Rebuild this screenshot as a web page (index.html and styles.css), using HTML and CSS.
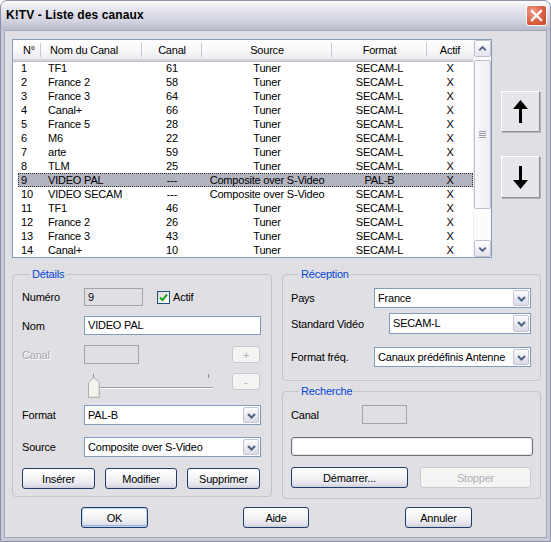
FILE: index.html
```html
<!DOCTYPE html>
<html lang="fr">
<head>
<meta charset="utf-8">
<title>K!TV - Liste des canaux</title>
<link rel="stylesheet" href="styles.css">
</head>
<body>
<div class="window">
  <div class="titlebar">
    <span class="title">K!TV - Liste des canaux</span>
    <div class="close">
      <svg width="21" height="21" viewBox="0 0 21 21"><path d="M6 6 L15 15 M15 6 L6 15" stroke="#fff" stroke-width="2.4" stroke-linecap="square"/></svg>
    </div>
  </div>
  <div class="client">
    <div class="top">
      <div class="list">
        <div class="list-body">
          <div class="lhead">
            <div class="h c1">N°</div><div class="h c2">Nom du Canal</div><div class="h">Canal</div><div class="h">Source</div><div class="h">Format</div><div class="h">Actif</div>
          </div>
          <div class="lrow"><div class="c1">1</div><div class="c2">TF1</div><div>61</div><div>Tuner</div><div>SECAM-L</div><div>X</div></div>
          <div class="lrow"><div class="c1">2</div><div class="c2">France 2</div><div>58</div><div>Tuner</div><div>SECAM-L</div><div>X</div></div>
          <div class="lrow"><div class="c1">3</div><div class="c2">France 3</div><div>64</div><div>Tuner</div><div>SECAM-L</div><div>X</div></div>
          <div class="lrow"><div class="c1">4</div><div class="c2">Canal+</div><div>66</div><div>Tuner</div><div>SECAM-L</div><div>X</div></div>
          <div class="lrow"><div class="c1">5</div><div class="c2">France 5</div><div>28</div><div>Tuner</div><div>SECAM-L</div><div>X</div></div>
          <div class="lrow"><div class="c1">6</div><div class="c2">M6</div><div>22</div><div>Tuner</div><div>SECAM-L</div><div>X</div></div>
          <div class="lrow"><div class="c1">7</div><div class="c2">arte</div><div>59</div><div>Tuner</div><div>SECAM-L</div><div>X</div></div>
          <div class="lrow"><div class="c1">8</div><div class="c2">TLM</div><div>25</div><div>Tuner</div><div>SECAM-L</div><div>X</div></div>
          <div class="lrow sel"><div class="c1">9</div><div class="c2">VIDEO PAL</div><div>---</div><div>Composite over S-Video</div><div>PAL-B</div><div>X</div></div>
          <div class="lrow"><div class="c1">10</div><div class="c2">VIDEO SECAM</div><div>---</div><div>Composite over S-Video</div><div>SECAM-L</div><div>X</div></div>
          <div class="lrow"><div class="c1">11</div><div class="c2">TF1</div><div>46</div><div>Tuner</div><div>SECAM-L</div><div>X</div></div>
          <div class="lrow"><div class="c1">12</div><div class="c2">France 2</div><div>26</div><div>Tuner</div><div>SECAM-L</div><div>X</div></div>
          <div class="lrow"><div class="c1">13</div><div class="c2">France 3</div><div>43</div><div>Tuner</div><div>SECAM-L</div><div>X</div></div>
          <div class="lrow"><div class="c1">14</div><div class="c2">Canal+</div><div>10</div><div>Tuner</div><div>SECAM-L</div><div>X</div></div>
        </div>
        <div class="vscroll">
          <div class="sbtn"><svg width="16" height="16" viewBox="0 0 16 16"><path d="M4.5 9.5 L8 6 L11.5 9.5" fill="none" stroke="#4d6185" stroke-width="2"/></svg></div>
          <div class="thumb"><div class="grip"></div></div>
          <div class="track"></div>
          <div class="sbtn"><svg width="16" height="16" viewBox="0 0 16 16"><path d="M4.5 6.5 L8 10 L11.5 6.5" fill="none" stroke="#4d6185" stroke-width="2"/></svg></div>
        </div>
      </div>
      <div class="movebtns">
        <div class="mv up"><svg width="15" height="23" viewBox="0 0 15 23"><path d="M7.5 0 L15 9 L9 9 L9 23 L6 23 L6 9 L0 9 Z" fill="#000"/></svg></div>
        <div class="mv down"><svg width="15" height="23" viewBox="0 0 15 23"><path d="M7.5 23 L15 14 L9 14 L9 0 L6 0 L6 14 L0 14 Z" fill="#000"/></svg></div>
      </div>
    </div>

    <div class="mid">
      <div class="group details">
        <div class="gtitle">Détails</div>
        <div class="row r-num">
          <span class="lbl">Numéro</span>
          <div class="field ro num">9</div>
          <div class="check"><svg width="11" height="11" viewBox="0 0 11 11"><path d="M2 5.5 L4.5 8 L9 2.5" fill="none" stroke="#21a121" stroke-width="2"/></svg></div>
          <span class="chklbl">Actif</span>
        </div>
        <div class="row r-nom">
          <span class="lbl">Nom</span>
          <div class="field edit">VIDEO PAL</div>
        </div>
        <div class="row r-canal">
          <span class="lbl disabled">Canal</span>
          <div class="field ro canal"></div>
          <div class="btn small dis plus">+</div>
        </div>
        <div class="row r-slider">
          <svg class="slider" width="140" height="25" viewBox="0 0 140 25">
            <rect x="9" y="1" width="1" height="4" fill="#8d8d95"/>
            <rect x="124" y="1" width="1" height="4" fill="#8d8d95"/>
            <rect x="9" y="14" width="120" height="1" fill="#9a9aa4"/>
            <rect x="9" y="15" width="120" height="1" fill="#ffffff"/>
            <path d="M4.5 9.5 L10 4.5 L15.5 9.5 L15.5 24.5 L4.5 24.5 Z" fill="#f3f2ec" stroke="#aeadb0"/>
            <path d="M5 24 L15 24 L15 10" fill="none" stroke="#c8c6bd"/>
          </svg>
          <div class="btn small dis minus">-</div>
        </div>
        <div class="row r-format">
          <span class="lbl">Format</span>
          <div class="combo w177"><span class="ctext">PAL-B</span><span class="cbtn"><svg width="13" height="15" viewBox="0 0 13 15"><path d="M3 6 L6.5 9.5 L10 6" fill="none" stroke="#4d6185" stroke-width="2"/></svg></span></div>
        </div>
        <div class="row r-source">
          <span class="lbl">Source</span>
          <div class="combo w177"><span class="ctext">Composite over S-Video</span><span class="cbtn"><svg width="13" height="15" viewBox="0 0 13 15"><path d="M3 6 L6.5 9.5 L10 6" fill="none" stroke="#4d6185" stroke-width="2"/></svg></span></div>
        </div>
        <div class="row r-btns">
          <div class="btn b73">Insérer</div>
          <div class="btn b72">Modifier</div>
          <div class="btn b73">Supprimer</div>
        </div>
      </div>

      <div class="rightcol">
        <div class="group recv">
          <div class="gtitle">Réception</div>
          <div class="row r-pays">
            <span class="lbl lw83">Pays</span>
            <div class="combo w157"><span class="ctext">France</span><span class="cbtn"><svg width="13" height="15" viewBox="0 0 13 15"><path d="M3 6 L6.5 9.5 L10 6" fill="none" stroke="#4d6185" stroke-width="2"/></svg></span></div>
          </div>
          <div class="row r-std">
            <span class="lbl lw98">Standard Vidéo</span>
            <div class="combo w142"><span class="ctext">SECAM-L</span><span class="cbtn"><svg width="13" height="15" viewBox="0 0 13 15"><path d="M3 6 L6.5 9.5 L10 6" fill="none" stroke="#4d6185" stroke-width="2"/></svg></span></div>
          </div>
          <div class="row r-freq">
            <span class="lbl lw83">Format fréq.</span>
            <div class="combo w157"><span class="ctext">Canaux prédéfinis Antenne</span><span class="cbtn"><svg width="13" height="15" viewBox="0 0 13 15"><path d="M3 6 L6.5 9.5 L10 6" fill="none" stroke="#4d6185" stroke-width="2"/></svg></span></div>
          </div>
        </div>
        <div class="group search">
          <div class="gtitle">Recherche</div>
          <div class="row r-scanal">
            <span class="lbl lw71">Canal</span>
            <div class="field ro scanal"></div>
          </div>
          <div class="row r-prog">
            <div class="progress"></div>
          </div>
          <div class="row r-sbtns">
            <div class="btn b117">Démarrer...</div>
            <div class="btn dis b111">Stopper</div>
          </div>
        </div>
      </div>
    </div>

    <div class="bottom">
      <div class="btn def b67">OK</div>
      <div class="btn b66 aide">Aide</div>
      <div class="btn b67 annuler">Annuler</div>
    </div>
  </div>
</div>
</body>
</html>
```

FILE: styles.css
```css
* { box-sizing: border-box; }

body {
  margin: 0;
  background: #ffffff;
  font-family: "Liberation Sans", Arial, sans-serif;
  font-size: 11px;
  letter-spacing: -0.2px;
  color: #000;
}

.window {
  width: 551px;
  height: 542px;
  display: flex;
  flex-direction: column;
  background: #c9cad8;
  border: 1px solid #8e8fa3;
  border-radius: 7px 7px 0 0;
  overflow: hidden;
}

.titlebar {
  height: 29px;
  flex: none;
  display: flex;
  align-items: center;
  justify-content: space-between;
  padding: 0 3px 1px 5px;
  background: linear-gradient(#fdfdfe 0%, #ececf2 18%, #dedee8 45%, #d2d3df 70%, #b7b8ca 100%);
}

.title {
  font-weight: bold;
  font-size: 12px;
  color: #000;
  letter-spacing: 0.1px;
}

.close {
  width: 21px;
  height: 21px;
  border: 1px solid #fff;
  border-radius: 3px;
  background: radial-gradient(circle at 30% 30%, #f0a08a 0%, #e0684c 45%, #c8401f 100%);
  display: flex;
}
.close svg { margin: -1px; }

.client {
  flex: 1;
  margin: 0 3px 3px 3px;
  background: #e0dfe3;
  border: 1px solid #a5a6b8;
  padding: 8px 0 0 7px;
  display: flex;
  flex-direction: column;
}

/* ---------- top: list ---------- */
.top {
  display: flex;
  align-items: flex-start;
}

.list {
  width: 480px;
  height: 219px;
  border: 1px solid #7f9db9;
  background: #fff;
  display: flex;
}

.list-body {
  width: 460px;
  overflow: hidden;
}

.lhead {
  height: 21px;
  display: grid;
  grid-template-columns: 28px 101px 60px 130px 95px 46px;
  background: linear-gradient(#ffffff 0%, #f7f7f9 60%, #ebebef 100%);
  border-bottom: 2px solid #d4d4dc;
  box-shadow: 0 1px 0 #c0c0cc;
}

.lhead .h {
  line-height: 20px;
  text-align: center;
  background: linear-gradient(#c6c6cd, #c6c6cd) right center / 1px 14px no-repeat;
}
.lhead .h.c1 { text-align: left; padding-left: 10px; }
.lhead .h.c2 { text-align: left; padding-left: 9px; }
.lhead .h:last-child { background: none; }

.lrow {
  height: 14px;
  line-height: 14px;
  margin-left: 5px;
  display: grid;
  grid-template-columns: 23px 101px 60px 130px 95px 46px;
  white-space: nowrap;
}
.lrow div { text-align: center; }
.lrow .c1 { text-align: left; padding-left: 3px; }
.lrow .c2 { text-align: left; padding-left: 7px; }

.lrow.sel {
  background: #b2b4c0;
  outline: 1px dotted #333;
  outline-offset: -1px;
}

.vscroll {
  width: 18px;
  display: flex;
  flex-direction: column;
  background: #fcfcfd;
  border-left: 1px solid #eeeef2;
}

.sbtn {
  width: 17px;
  height: 17px;
  border: 1px solid #c0c1d0;
  border-radius: 2px;
  background: linear-gradient(#ffffff, #e3e3ec);
  display: flex;
  align-items: center;
  justify-content: center;
}

.thumb {
  height: 149px;
  margin-top: 3px;
  width: 17px;
  border: 1px solid #bebfcd;
  border-radius: 2px;
  background: linear-gradient(90deg, #fafafc, #ececf2);
  display: flex;
  align-items: center;
  justify-content: center;
}
.grip {
  width: 7px;
  height: 7px;
  background: repeating-linear-gradient(#9a9aa8 0 1px, transparent 1px 2px);
}

.track { flex: 1; }

.movebtns {
  margin-left: 9px;
  display: flex;
  flex-direction: column;
}

.mv {
  width: 39px;
  background: #e7e6ea;
  border: 1px solid;
  border-color: #ffffff #8f8f96 #8f8f96 #ffffff;
  box-shadow: 1px 1px 0 #b4b4bc;
  display: flex;
  align-items: center;
  justify-content: center;
}
.mv.up { margin-top: 52px; height: 41px; }
.mv.down { margin-top: 24px; height: 42px; }

/* ---------- middle ---------- */
.mid {
  display: flex;
  align-items: flex-start;
  margin-top: 16px;
}

.group {
  border: 1px solid #c3c3cb;
  border-radius: 4px;
}

.gtitle {
  width: fit-content;
  margin: -7px 0 0 8px;
  padding: 0 2px;
  line-height: 13px;
  color: #0046d5;
  background: #e0dfe3;
}

.details {
  width: 260px;
  height: 223px;
  padding-left: 9px;
}

.rightcol {
  margin-left: 10px;
  width: 259px;
  display: flex;
  flex-direction: column;
}

.recv { height: 107px; padding-left: 8px; }
.search { height: 108px; margin-top: 10px; padding-left: 8px; }

.row {
  display: flex;
  align-items: center;
}

.lbl { width: 62px; flex: none; }
.lbl.disabled { color: #a7a6ac; text-shadow: 1px 1px 0 #fff; }
.lw83 { width: 83px; }
.lw98 { width: 98px; }
.lw71 { width: 71px; }

.field {
  height: 19px;
  line-height: 17px;
  padding-left: 3px;
  border: 1px solid #7f9db9;
  background: #fff;
}
.field.ro {
  background: #e0dfe3;
  border-color: #a3a3aa;
}

.r-num { margin-top: 7px; height: 18px; }
.num { width: 59px; height: 18px; line-height: 16px; }

.check {
  margin-left: 14px;
  width: 13px;
  height: 13px;
  border: 1px solid #1c5180;
  background: linear-gradient(135deg, #dcdcd7, #fff);
  display: flex;
  align-items: center;
  justify-content: center;
}
.chklbl { margin-left: 3px; }

.r-nom { margin-top: 10px; height: 19px; }
.edit { width: 177px; }

.r-canal { margin-top: 10px; height: 19px; }
.canal { width: 55px; }
.plus { margin-left: 93px; }

.r-slider { margin-top: 9px; height: 25px; align-items: flex-start; }
.slider { margin-left: 62px; }
.minus { margin-left: 8px; }

.r-format { margin-top: 7px; height: 20px; }
.r-source { margin-top: 12px; height: 20px; }
.r-btns { margin-top: 11px; height: 21px; gap: 10px; }

.combo {
  height: 20px;
  display: flex;
  border: 1px solid #7f9db9;
  background: #fff;
}
.w177 { width: 177px; }
.w157 { width: 157px; }
.w142 { width: 142px; }

.ctext {
  flex: 1;
  padding-left: 3px;
  line-height: 18px;
  white-space: nowrap;
  overflow: hidden;
}
.cbtn {
  width: 16px;
  margin: 1px;
  border: 1px solid #c3c4d4;
  border-radius: 2px;
  background: linear-gradient(#fcfcfe, #dadbe6);
  display: flex;
  align-items: center;
  justify-content: center;
}

.r-pays { margin-top: 7px; height: 20px; }
.r-std { margin-top: 5px; height: 21px; }
.r-std .combo { height: 21px; }
.r-freq { margin-top: 13px; height: 20px; }

.r-scanal { margin-top: 7px; height: 19px; }
.scanal { width: 45px; }
.r-prog { margin-top: 13px; }
.progress {
  width: 242px;
  height: 19px;
  border: 1px solid #6f6f78;
  border-radius: 3px;
  background: #fff;
  box-shadow: inset 0 0 0 1px #e8e8ec;
}
.r-sbtns { margin-top: 11px; gap: 12px; }

/* ---------- buttons ---------- */
.btn {
  height: 21px;
  display: flex;
  align-items: center;
  justify-content: center;
  border: 1px solid #1d3d6b;
  border-radius: 3px;
  background: linear-gradient(#ffffff 0%, #f6f6f8 40%, #e6e6ee 80%, #cfd0dc 100%);
  color: #000;
}
.btn.dis {
  border-color: #c9c8cf;
  background: #f4f4f2;
  color: #b0afb4;
}
.btn.small { width: 28px; height: 17px; }
.b73 { width: 73px; }
.b72 { width: 72px; }
.b117 { width: 117px; }
.b111 { width: 111px; }
.b67 { width: 67px; }
.b66 { width: 66px; }
.btn.def {
  box-shadow: inset 0 0 0 1px #c2d2ef, inset 0 -1px 0 1px #99b0dc;
}

.bottom {
  display: flex;
  margin-top: 8px;
  padding-left: 69px;
}
.aide { margin-left: 95px; }
.annuler { margin-left: 96px; }
```
